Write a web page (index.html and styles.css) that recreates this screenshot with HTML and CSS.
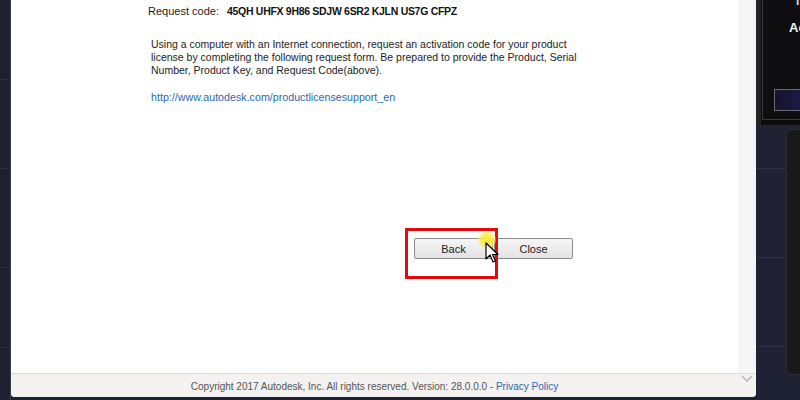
FILE: index.html
```html
<!DOCTYPE html>
<html>
<head>
<meta charset="utf-8">
<link rel="stylesheet" href="styles.css">
</head>
<body>
<div class="desk">
  <div class="gutter">
    <div class="hl" style="top:79px"></div>
    <div class="hl" style="top:168px"></div>
    <div class="hl" style="top:267px"></div>
    <div class="hl" style="top:347px"></div>
  </div>
  <div class="dialog">
    <div class="main">
      <div class="content">
        <div class="req"><span class="req-label">Request code:</span><span class="req-code">45QH UHFX 9H86 SDJW 6SR2 KJLN US7G CFPZ</span></div>
        <p class="para">Using a computer with an Internet connection, request an activation code for your product license by completing the following request form. Be prepared to provide the Product, Serial Number, Product Key, and Request Code(above).</p>
        <a class="link">http://www.autodesk.com/productlicensesupport_en</a>
        <div class="actions">
          <div class="btns">
            <button class="btn">Back</button>
            <button class="btn">Close</button>
            <div class="redbox"></div>
            <div class="glow"></div>
            <svg class="cursor" width="14" height="22" viewBox="0 0 14 22">
              <path d="M1 1 L1 17 L5 13 L8 20 L10.5 19 L7.5 12.5 L13 12.5 Z" fill="#fff" stroke="#000" stroke-width="1.2" stroke-linejoin="round"/>
            </svg>
          </div>
        </div>
      </div>
      <div class="scroll"></div>
    </div>
    <div class="footer">
      <span class="copy">Copyright 2017 Autodesk, Inc. All rights reserved. Version: 28.0.0.0 - <a class="plink">Privacy Policy</a></span>
      <svg class="chev" width="12" height="8" viewBox="0 0 12 8"><path d="M1 1 L6 6 L11 1" fill="none" stroke="#b9b9bd" stroke-width="1.6"/></svg>
    </div>
  </div>
  <div class="side">
    <div class="blackbox">
      <div class="bb-inner">
        <span class="bb-top">l</span>
        <span class="bb-ac">Ac</span>
        <div class="bb-btn"></div>
      </div>
    </div>
    <div class="lower">
      <div class="hl2" style="top:43px"></div>
      <div class="hl2" style="top:132px"></div>
      <div class="hl2" style="top:221px"></div>
      <div class="panel"></div>
    </div>
  </div>
</div>
</body>
</html>
```
FILE: styles.css
```css
html, body {
  margin: 0;
  padding: 0;
}
body {
  width: 800px;
  height: 400px;
  overflow: hidden;
  background: #1d2030;
  font-family: "Liberation Sans", Arial, sans-serif;
}
.desk {
  display: flex;
  height: 400px;
}
.gutter {
  position: relative;
  width: 11px;
  flex: none;
  background: #1e2131;
  border-right: 1px solid #3a3d4a;
  box-sizing: border-box;
}
.hl {
  position: absolute;
  left: 0;
  right: 0;
  height: 1px;
  background: #2b2e3d;
}
.dialog {
  width: 745px;
  height: 397px;
  flex: none;
  display: flex;
  flex-direction: column;
  background: #fff;
  border-radius: 0 0 4px 4px;
  overflow: hidden;
}
.main {
  flex: 1;
  display: flex;
}
.content {
  flex: 1;
  padding: 5px 0 0 137px;
  font-family: "Liberation Sans", Arial, sans-serif;
  font-size: 11px;
  color: #222;
}
.req {
  display: flex;
  align-items: baseline;
  line-height: 13px;
}
.req-label {
  width: 79px;
}
.req-code {
  font-weight: bold;
  font-size: 10.5px;
  letter-spacing: -0.3px;
  color: #111;
}
.para {
  margin: 20px 0 0 3px;
  width: 432px;
  line-height: 13px;
  font-size: 10.5px;
}
.link {
  display: block;
  margin: 14px 0 0 3px;
  color: #2a6ab3;
  font-size: 10.7px;
  line-height: 13px;
}
.actions {
  margin-top: 134px;
  padding-left: 266px;
}
.btns {
  position: relative;
  display: flex;
  gap: 1px;
  width: 160px;
}
.btn {
  width: 79px;
  height: 21px;
  border: 1px solid #8c8c8c;
  border-radius: 2px;
  background: linear-gradient(#f6f6f6, #e2e2e2);
  font-family: "Liberation Sans", Arial, sans-serif;
  font-size: 11px;
  color: #222;
  padding: 0;
}
.redbox {
  position: absolute;
  left: -9px;
  top: -10px;
  width: 87px;
  height: 45px;
  border: 3px solid #e20a0a;
}
.glow {
  position: absolute;
  left: 64px;
  top: -7px;
  width: 18px;
  height: 18px;
  border-radius: 50%;
  background: radial-gradient(circle, rgba(250,235,60,0.95) 35%, rgba(250,240,120,0.5) 65%, rgba(255,250,180,0) 100%);
}
.cursor {
  position: absolute;
  left: 71px;
  top: 4px;
}
.scroll {
  width: 18px;
  flex: none;
  background: #f6f6f8;
}
.footer {
  position: relative;
  height: 23px;
  flex: none;
  display: flex;
  align-items: center;
  border-top: 1px solid #dcdcdc;
  background: #f3f2f0;
}
.copy {
  width: 727px;
  text-align: center;
  font-family: "Liberation Sans", Arial, sans-serif;
  font-size: 10px;
  color: #555;
  padding-top: 1px;
}
.plink {
  color: #2a6ab3;
}
.chev {
  position: absolute;
  right: 3px;
  top: 1px;
}
.side {
  flex: 1;
  display: flex;
  flex-direction: column;
}
.blackbox {
  height: 125px;
  background: #0b0b0d;
  border-left: 5px solid #232326;
  box-sizing: border-box;
  padding: 0 0 5px 1px;
}
.bb-inner {
  position: relative;
  height: 100%;
  border-left: 1px solid #3a3a3c;
  border-bottom: 1px solid #3a3a3c;
  box-sizing: border-box;
  background: #0e0e10;
  overflow: hidden;
}
.bb-top {
  position: absolute;
  left: 33px;
  top: -6px;
  color: #ddd;
  font-family: "Liberation Sans", Arial, sans-serif;
  font-size: 12px;
  font-weight: bold;
}
.bb-ac {
  position: absolute;
  left: 26px;
  top: 20px;
  color: #f2f2f2;
  font-family: "Liberation Sans", Arial, sans-serif;
  font-size: 13px;
  font-weight: bold;
}
.bb-btn {
  position: absolute;
  left: 11px;
  top: 89px;
  right: -4px;
  height: 20px;
  border: 1px solid #6a6a72;
  background: linear-gradient(90deg, #141428, #1c1a4a);
}
.lower {
  position: relative;
  flex: 1;
  background: #1e2232;
}
.hl2 {
  position: absolute;
  left: 0;
  right: 0;
  height: 1px;
  background: #2e3242;
}
.panel {
  position: absolute;
  left: 30px;
  right: -6px;
  top: 4px;
  height: 244px;
  background: #19191c;
  border: 1px solid #2c2c30;
  border-radius: 5px;
}
```
